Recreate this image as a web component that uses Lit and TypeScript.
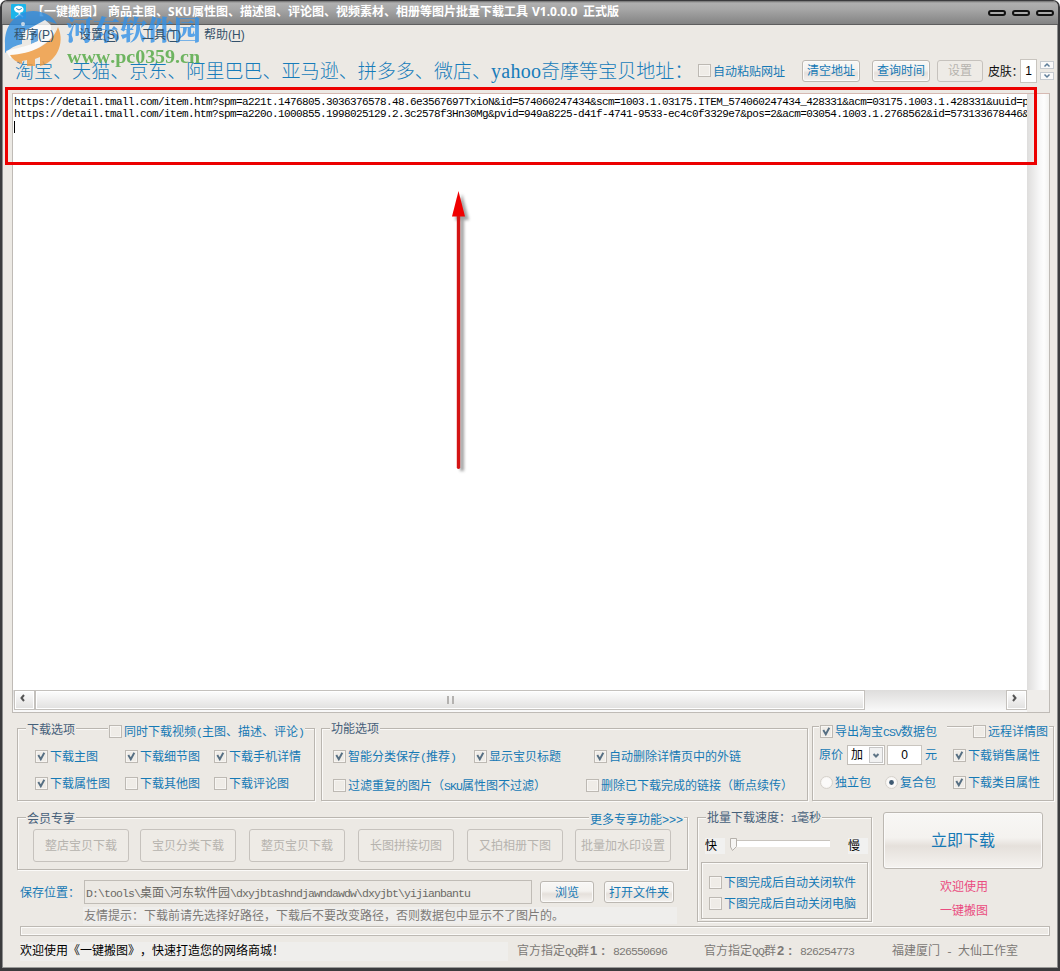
import { LitElement, html, css, svg } from "lit";
import { customElement, property } from "lit/decorators.js";
import { classMap } from "lit/directives/class-map.js";

/** Splits a label into half-width (fixed pitch) and full-width runs. */
const mixed = (text: string) =>
  (text.match(/[\x20-\x7e]+|[^\x20-\x7e]+/g) ?? []).map((run) =>
    /^[\x20-\x7e]/.test(run) ? html`<span class="half">${run}</span>` : html`<span>${run}</span>`
  );

const half = css`
  .half {
    font-family: "Liberation Mono", monospace;
    font-size: 11.5px;
    letter-spacing: -0.9px;
    white-space: pre;
  }
`;

@customElement("check-item")
class CheckItem extends LitElement {
  @property() label = "";
  @property({ type: Boolean }) checked = false;
  @property({ type: Boolean }) radio = false;
  static styles = [
    half,
    css`
      :host {
        display: flex;
        align-items: center;
        height: 16px;
        color: #1679b5;
        white-space: nowrap;
        font-size: 12px;
        line-height: 16px;
      }
      .box {
        box-sizing: border-box;
        flex: none;
        width: 13px;
        height: 13px;
        border: 1px solid #bdb9b3;
        background: #efece7;
        box-shadow: inset 0 0 0 1px #f7f5f2;
        margin-right: 2px;
      }
      .text {
        padding-top: 2px;
      }
      .round {
        border-radius: 50%;
        border-color: #d5d1cb;
        background: #fbfaf9;
      }
      svg {
        display: block;
        width: 11px;
        height: 11px;
      }
    `,
  ];
  render() {
    return html`<span class=${classMap({ box: true, round: this.radio })}>
        ${this.checked
          ? html`<svg viewBox="0 0 11 11">
              ${this.radio
                ? svg`<circle cx="5.5" cy="5.5" r="2.4" fill="#3f5a72"/>`
                : svg`<path d="M2.300 4L4.800 8.300L8.300 1.800" fill="none" stroke="#566f83" stroke-width="1.9"/>`}
            </svg>`
          : ""}
      </span>
      <span class="text">${mixed(this.label)}</span>`;
  }
}

@customElement("app-root")
class AppRoot extends LitElement {
  static styles = [
    half,
    css`
      :host {
        display: block;
        font-family: "Liberation Sans", "Noto Sans CJK SC", sans-serif;
        font-size: 12px;
        color: #1679b5;
        text-spacing-trim: space-all;
        font-kerning: none;
      }
      * {
        box-sizing: border-box;
      }
      .window {
        position: relative;
        width: 1060px;
        height: 971px;
        background: #ece9e4;
        border: solid #3b3b3d;
        border-width: 1px 2px 3px 2px;
        border-radius: 7px 7px 0 0;
        box-shadow: inset 1px 0 #8d8d8d, inset -1px 0 #8d8d8d, inset 0 -1px #9a9a98;
        overflow: hidden;
        white-space: nowrap;
        line-height: 16px;
      }
      .title {
        height: 24px;
        display: flex;
        align-items: center;
        padding: 0 4px 2px 9px;
        background: linear-gradient(#6d6d6d, #b0b0b0 2px, #a7a7a7 35%, #838383);
        border-bottom: 1px solid #5e5e5e;
        color: #fff;
        font: bold 12px/20px "Noto Sans", "Noto Sans CJK SC", sans-serif;
      }
      .title svg {
        width: 15px;
        height: 15px;
        margin-right: 6px;
      }
      .sku {
        display: inline-block;
        width: 24px;
      }
      .ver {
        width: 47px;
        margin: 0 4px;
      }
      .wbtns {
        margin-left: auto;
        display: flex;
        gap: 6px;
      }
      .wbtns i {
        width: 18px;
        height: 6px;
        border: 2px solid #111;
        border-radius: 3px;
        background: #aaa;
        margin-top: 2px;
      }
      .menu {
        height: 21px;
        display: grid;
        grid-template-columns: 65px 63px 62px 60px;
        padding: 2px 0 0 12px;
        color: #34516a;
        position: relative;
        z-index: 1;
      }
      .menu u {
        text-underline-offset: 2px;
      }
      .tools {
        height: 47px;
        display: flex;
        align-items: center;
        padding: 2px 0 0 13px;
      }
      .heading {
        font-size: 19px;
        line-height: 24px;
        font-weight: 300;
        letter-spacing: 0.04px;
        width: 683px;
        padding-top: 1px;
        color: #177cba;
      }
      .heading span {
        display: inline-block;
        width: 50px;
        font-family: "Liberation Serif", serif;
        font-size: 20px;
        letter-spacing: 0.3px;
      }
      .btn {
        display: flex;
        align-items: center;
        justify-content: center;
        height: 22px;
        padding-top: 1px;
        border: 1px solid #bcb8b2;
        border-radius: 3px;
        background: linear-gradient(#f8f7f5, #f4f2ef 45%, #e5e0db 60%, #f5f3f0);
        box-shadow: inset 0 0 0 1px #fbfaf9;
        color: #1679b5;
      }
      .dis {
        color: #b6b3ae;
        border-color: #c6c2bd;
        background: #eeebe6;
        box-shadow: none;
      }
      .tools .a { width: 58px; margin-left: 17px; }
      .tools .b { width: 58px; margin-left: 12px; }
      .tools .c { width: 46px; margin-left: 7px; }
      .skin {
        width: 36px;
        margin: 0 -4px 0 5px;
        padding-top: 2px;
        color: #111;
        letter-spacing: -0.2px;
      }
      .num {
        display: flex;
        align-items: center;
        justify-content: center;
        width: 17px;
        height: 24px;
        background: #fff;
        border: 1px solid #c9c5bf;
        color: #000;
      }
      .spin {
        margin-left: 3px;
        display: grid;
        gap: 3px;
      }
      .spin svg {
        display: block;
        width: 14px;
        height: 8px;
        border: 1px solid #c6cbd0;
        background: #fafafa;
      }
      .editor {
        width: 1038px;
        height: 620px;
        margin-left: 10px;
        border: 1px solid #bfbbb6;
        border-top-color: #d6b9b2;
        display: grid;
        grid-template: 596px 22px / 1014px 22px;
      }
      .lines {
        background: #fff;
        margin: 0;
        padding: 2px 0 0 1px;
        color: #000;
        overflow: hidden;
        line-height: 12px;
        white-space: pre;
      }
      .lines div {
        height: 12px;
        font-size: 11px;
        letter-spacing: -0.6px;
      }
      .caret {
        display: block;
        width: 1px;
        height: 12px;
        margin-top: 1px;
        background: #000;
      }
      .vbar {
        background: linear-gradient(90deg, #dedddc, #f6f6f6 12px, #fdfdfd 17px, #f3f2f0);
      }
      .hbar {
        display: flex;
        width: 1014px;
        padding-left: 1px;
        background: linear-gradient(#dedddc, #fafafa);
      }
      .arrow,
      .thumb {
        border: 1px solid #c4c1bd;
        background: linear-gradient(#fdfdfd, #e1e0df);
        box-shadow: inset 0 0 0 1px #fff;
        height: 20px;
      }
      .arrow {
        width: 21px;
      }
      .arrow svg {
        display: block;
        width: 19px;
        height: 16px;
      }
      .thumb {
        width: 830px;
        display: flex;
        align-items: center;
        justify-content: center;
        gap: 3px;
      }
      .thumb i {
        width: 2px;
        height: 8px;
        background: #b4b2b0;
      }
      .hbar .end {
        margin-left: 141px;
      }
      .corner {
        background: #efedea;
      }
      .group {
        border: 1px solid #bab6b0;
        box-shadow: inset 1px 1px #fbfaf8, 1px 1px #fbfaf8;
      }
      .row {
        display: grid;
        align-items: center;
        height: 16px;
      }
      .legend {
        color: #46607a;
      }
      .cut,
      .legend {
        background: #ece9e4;
        justify-self: start;
        padding: 0 1px;
      }
      .legend {
        padding: 1px 1px 0;
      }
      .options {
        display: flex;
        padding: 15px 0 0 15px;
        height: 88px;
      }
      .options .group {
        height: 73px;
      }
      .g1 { width: 298px; }
      .g2 { width: 487px; margin-left: 6px; }
      .options .g3 { width: 242px; height: 75px; margin: -2px 0 0 4px; }
      .g1 .r0 { grid-template-columns: 82px auto; margin: -9px 0 0 8px; }
      .g1 .r1, .g1 .r2 { grid-template-columns: 90px 89px auto; margin: 11px 0 0 17px; }
      .g1 .r1 { margin-top: 12px; }
      .g1 .cut { margin-top: 3px; }
      .g2 .r0 { margin: -9px 0 0 8px; }
      .g2 .r1 { grid-template-columns: 141px 120px auto; margin: 12px 0 0 11px; }
      .g2 .r2 { grid-template-columns: 253px auto; margin: 13px 0 0 11px; }
      .g3 .r0 { grid-template-columns: 153px auto; margin: -4px 0 0 6px; }
      .g3 .r1 { grid-template-columns: 28px 40px 35px 31px auto; margin: 6px 0 0 6px; height: 20px; }
      .g3 .r2 { grid-template-columns: 65px 68px auto; margin: 9px 0 0 7px; }
      .g3 .first { width: 128px; }
      .sel {
        width: 38px;
        height: 20px;
        display: flex;
        align-items: center;
        background: #fff;
        border: 1px solid #c2beb8;
        color: #000;
        padding: 0 1px 0 3px;
        justify-content: space-between;
      }
      .sel svg {
        width: 14px;
        height: 16px;
        border: 1px solid #c6c6c6;
        background: #f1f1f1;
      }
      .zero.num { width: 35px; height: 20px; }
      .lower {
        display: flex;
        padding-left: 15px;
        height: 124px;
      }
      .left {
        width: 671px;
        padding-top: 16px;
      }
      .member {
        height: 53px;
      }
      .member .r0 {
        grid-template-columns: 563px auto;
        margin: -10px 0 0 8px;
      }
      .member .cut {
        margin-top: 4px;
      }
      .mbtns {
        display: grid;
        grid-template-columns: 107px 109px 109px 109px 108px 96px;
        margin: 5px 0 0 15px;
      }
      .mbtns .btn {
        width: 96px;
        height: 33px;
      }
      .save {
        display: flex;
        align-items: center;
        margin: 10px 0 0 3px;
        height: 24px;
      }
      .save label {
        width: 64px;
        padding-top: 2px;
      }
      .path {
        width: 448px;
        height: 24px;
        border: 1px solid #c0bcb6;
        padding: 4px 0 0 1px;
        color: #6b6966;
      }
      .save .o { width: 54px; margin-left: 8px; }
      .save .p { width: 70px; margin-left: 10px; }
      .hint {
        margin: 3px 0 0 66px;
        padding: 1px 0 0 1px;
        width: 594px;
        height: 17px;
        background: #efeeec;
        color: #7d7a77;
      }
      .speed {
        width: 175px;
        height: 105px;
        margin: 16px 0 0 9px;
      }
      .speed .r0 { margin: -9px 0 0 8px; }
      .slide {
        display: grid;
        grid-template-columns: 25px 118px auto;
        margin: 10px 0 0 7px;
        height: 22px;
        color: #000;
        align-items: center;
      }
      .slide svg {
        width: 102px;
        height: 18px;
        margin-top: -5px;
      }
      .slide b {
        font-weight: 400;
        background: #f1f1f0;
        width: 20px;
      }
      .inner {
        width: 167px;
        height: 57px;
        margin: 5px 0 0 3px;
        padding: 11px 0 0 7px;
        display: grid;
        align-content: start;
        gap: 5px;
      }
      .right {
        margin: 11px 0 0 11px;
        width: 160px;
        color: #ea4c80;
        text-align: center;
        line-height: 24px;
      }
      .big {
        height: 57px;
        font-size: 16px;
        margin-bottom: 6px;
      }
      .right p {
        margin: 0 0 0 2px;
      }
      .progress {
        width: 1030px;
        height: 10px;
        border: 1px solid #bdb9b3;
        box-shadow: inset 0 0 0 1px #fbfaf8;
        margin: 1px 0 0 18px;
      }
      .status {
        display: grid;
        grid-template-columns: 497px 187px 188px auto;
        margin: 6px 0 0 18px;
        line-height: 18px;
        color: #7c7976;
      }
      .welcome {
        width: 488px;
        background: #efeeec;
        color: #000;
      }
      .status b {
        display: inline-block;
        width: 24px;
        padding-left: 1px;
        font-size: 13px;
        white-space: pre;
      }
      .mark {
        position: absolute;
        left: -2px;
        top: -1px;
        width: 210px;
        height: 75px;
      }
      .frame {
        position: absolute;
        left: 3px;
        top: 86px;
        width: 1032px;
        height: 78px;
        border: 3px solid #ec0000;
      }
      .pointer {
        position: absolute;
        left: 438px;
        top: 179px;
        width: 40px;
        height: 300px;
      }
    `,
  ];

  private menus = [["程序", "P"], ["设置", "S"], ["工具", "T"], ["帮助", "H"]];
  private urls = [
    "https://detail.tmall.com/item.htm?spm=a221t.1476805.3036376578.48.6e3567697TxioN&id=574060247434&scm=1003.1.03175.ITEM_574060247434_428331&acm=03175.1003.1.428331&uuid=p",
    "https://detail.tmall.com/item.htm?spm=a220o.1000855.1998025129.2.3c2578f3Hn30Mg&pvid=949a8225-d41f-4741-9533-ec4c0f3329e7&pos=2&acm=03054.1003.1.2768562&id=573133678446&",
  ];
  private members = ["整店宝贝下载", "宝贝分类下载", "整页宝贝下载", "长图拼接切图", "又拍相册下图", "批量加水印设置"];

  render() {
    return html`<div class="window">
      <div class="title">
        <svg viewBox="0 0 15 15">
          <rect width="15" height="15" rx="1" fill="#1cb5ea" />
          <path d="M3 5.200C3 2.500 6 1.200 8.800 2C12 2.200 13.500 5 12 7.200C10 9.500 4 9.400 3 5.200Z" fill="#fff" />
          <path d="M8 8L9 12M4.500 13.500L9 10.500L12 13" fill="none" stroke="#d8f2fb" stroke-width="1.5" />
          <path d="M5.300 4.500L8 6L10.800 4.400" fill="none" stroke="#1787bd" />
        </svg>
        <span>【一键搬图】</span><span style="margin-left:4px">商品主图、</span><span class="sku">SKU</span
        ><span>属性图、描述图、评论图、视频素材、相册等图片批量下载工具</span><span class="ver">V1.0.0.0</span><span>正式版</span>
        <div class="wbtns"><i></i><i></i><i></i></div>
      </div>
      <div class="menu">${this.menus.map(([n, k]) => html`<span>${n}(<u>${k}</u>)</span>`)}</div>
      <div class="tools">
        <div class="heading">淘宝、天猫、京东、阿里巴巴、亚马逊、拼多多、微店、<span>yahoo</span>奇摩等宝贝地址：</div>
        <check-item label="自动粘贴网址"></check-item>
        <div class="btn a">清空地址</div>
        <div class="btn b">查询时间</div>
        <div class="btn dis c">设置</div>
        <div class="skin">皮肤：</div>
        <div class="num">1</div>
        <div class="spin">
          <svg viewBox="0 0 12 6"><path d="M3.500 4.500L6 2L8.500 4.500" fill="none" stroke="#5d7d99" stroke-width="1.5" /></svg>
          <svg viewBox="0 0 12 6"><path d="M3.500 1.500L6 4L8.500 1.500" fill="none" stroke="#5d7d99" stroke-width="1.5" /></svg>
        </div>
      </div>

      <div class="editor">
        <div class="lines">${this.urls.map((u) => html`<div class="half">${u}</div>`)}<i class="caret"></i></div>
        <div class="vbar"></div>
        <div class="hbar">
          <div class="arrow"><svg viewBox="0 0 19 16"><path d="M9 4L6.500 7L9 10" fill="none" stroke="#555" stroke-width="2" /></svg></div>
          <div class="thumb"><i></i><i></i></div>
          <div class="arrow end"><svg viewBox="0 0 19 16"><path d="M6 4L8.500 7L6 10" fill="none" stroke="#555" stroke-width="2" /></svg></div>
        </div>
        <div class="corner"></div>
      </div>

      <div class="options">
        <div class="group g1">
          <div class="row r0">
            <span class="legend">下载选项</span>
            <check-item class="cut" label="同时下载视频(主图、描述、评论)"></check-item>
          </div>
          <div class="row r1">
            <check-item checked label="下载主图"></check-item>
            <check-item checked label="下载细节图"></check-item>
            <check-item checked label="下载手机详情"></check-item>
          </div>
          <div class="row r2">
            <check-item checked label="下载属性图"></check-item>
            <check-item label="下载其他图"></check-item>
            <check-item label="下载评论图"></check-item>
          </div>
        </div>
        <div class="group g2">
          <div class="row r0"><span class="legend">功能选项</span></div>
          <div class="row r1">
            <check-item checked label="智能分类保存(推荐)"></check-item>
            <check-item checked label="显示宝贝标题"></check-item>
            <check-item checked label="自动删除详情页中的外链"></check-item>
          </div>
          <div class="row r2">
            <check-item label="过滤重复的图片（SKU属性图不过滤）"></check-item>
            <check-item label="删除已下载完成的链接（断点续传）"></check-item>
          </div>
        </div>
        <div class="group g3">
          <div class="row r0">
            <check-item class="cut first" checked label="导出淘宝CSV数据包"></check-item>
            <check-item class="cut" label="远程详情图"></check-item>
          </div>
          <div class="row r1">
            <span>原价</span>
            <div class="sel">加<svg viewBox="0 0 12 14"><path d="M3.500 6L6 8.500L8.500 6" fill="none" stroke="#5e7486" stroke-width="2" /></svg></div>
            <div class="num zero">0</div>
            <span style="padding-left:3px">元</span>
            <check-item checked label="下载销售属性"></check-item>
          </div>
          <div class="row r2">
            <check-item radio label="独立包"></check-item>
            <check-item radio checked label="复合包"></check-item>
            <check-item checked label="下载类目属性"></check-item>
          </div>
        </div>
      </div>

      <div class="lower">
        <div class="left">
          <div class="group member">
            <div class="row r0"><span class="legend">会员专享</span><span class="cut">更多专享功能&gt;&gt;&gt;</span></div>
            <div class="mbtns">${this.members.map((m) => html`<div class="btn dis">${m}</div>`)}</div>
          </div>
          <div class="save">
            <label>保存位置：</label>
            <div class="path">${mixed("D:\\tools\\桌面\\河东软件园\\dxyjbtashndjawndawdw\\dxyjbt\\yijianbantu")}</div>
            <div class="btn o">浏览</div>
            <div class="btn p">打开文件夹</div>
          </div>
          <div class="hint">友情提示：下载前请先选择好路径，下载后不要改变路径，否则数据包中显示不了图片的。</div>
        </div>
        <div class="group speed">
          <div class="row r0"><span class="legend">${mixed("批量下载速度：1毫秒")}</span></div>
          <div class="slide">
            <b>快</b>
            <svg viewBox="0 0 102 18">
              <path d="M2 5.500H100" stroke="#c8c4be" />
              <rect x="2" y="6" width="98" height="6" fill="#fff" />
              <path d="M.5 3.500H6.500V11.500L2.500 15.500L.5 12Z" fill="#f6f5f3" stroke="#b5b1ab" />
            </svg>
            <b>慢</b>
          </div>
          <div class="group inner">
            <check-item label="下图完成后自动关闭软件"></check-item>
            <check-item label="下图完成后自动关闭电脑"></check-item>
          </div>
        </div>
        <div class="right">
          <div class="btn big">立即下载</div>
          <p>欢迎使用</p>
          <p>一键搬图</p>
        </div>
      </div>

      <div class="progress"></div>
      <div class="status">
        <span class="welcome">欢迎使用《一键搬图》，快速打造您的网络商城！</span>
        <span>${mixed("官方指定QQ群")}<b>1 :</b>${mixed("826550696")}</span>
        <span>${mixed("官方指定QQ群")}<b>2 :</b>${mixed("826254773")}</span>
        <span>${mixed("福建厦门 - 大仙工作室")}</span>
      </div>

      <svg class="mark" viewBox="0 0 210 75">
        <g opacity=".8">
          <path d="M5 44C4 26 16 11 33 11C44 11 52 16 57 24L48 21L22 32V44C16 45 10 48 5 53Z" fill="#2f8de0" />
          <path d="M25 31L45 20L51 25V38L45 40V32L40 34V42L31 44V38L25 40Z" fill="#fff" />
          <path d="M31 33L38 29V41L31 44Z" fill="#4b9be0" />
          <path d="M6 51C20 47 41 45 55 29C50 46 27 54 10 58Z" fill="#fff" />
          <path d="M58 27C66 44 55 63 40 66V57L35 59V66H27V60L22 61V64C16 62 12 59 10 55C31 54 52 45 58 27Z" fill="#f09a3c" />
          <circle cx="23" cy="24" r="2" fill="#d8ecff" />
          <text x="66" y="40" textLength="135" font-family="Noto Serif CJK SC, Noto Sans CJK SC, sans-serif" font-weight="900" font-size="27" fill="#3291e8">河东软件园</text>
          <text x="67" y="63" textLength="133" lengthAdjust="spacingAndGlyphs" font-family="Liberation Serif, serif" font-weight="700" font-size="19" fill="#4fa840">www.pc0359.cn</text>
        </g>
      </svg>
      <div class="frame"></div>
      <svg class="pointer" viewBox="0 0 40 300">
        <defs><filter id="soft" x="-100%" width="300%"><feGaussianBlur stdDeviation="1.5" /></filter></defs>
        <g filter="url(#soft)" opacity=".55" fill="#555">
          <path d="M22 14L29 40H15Z" />
          <path d="M20 40H24V291H20Z" />
        </g>
        <path d="M18.500 11L25 36.500H12Z" fill="#f00000" />
        <path d="M16.800 36H20.200V288Q18.500 290 16.800 288Z" fill="#d41414" />
      </svg>
    </div>`;
  }
}
